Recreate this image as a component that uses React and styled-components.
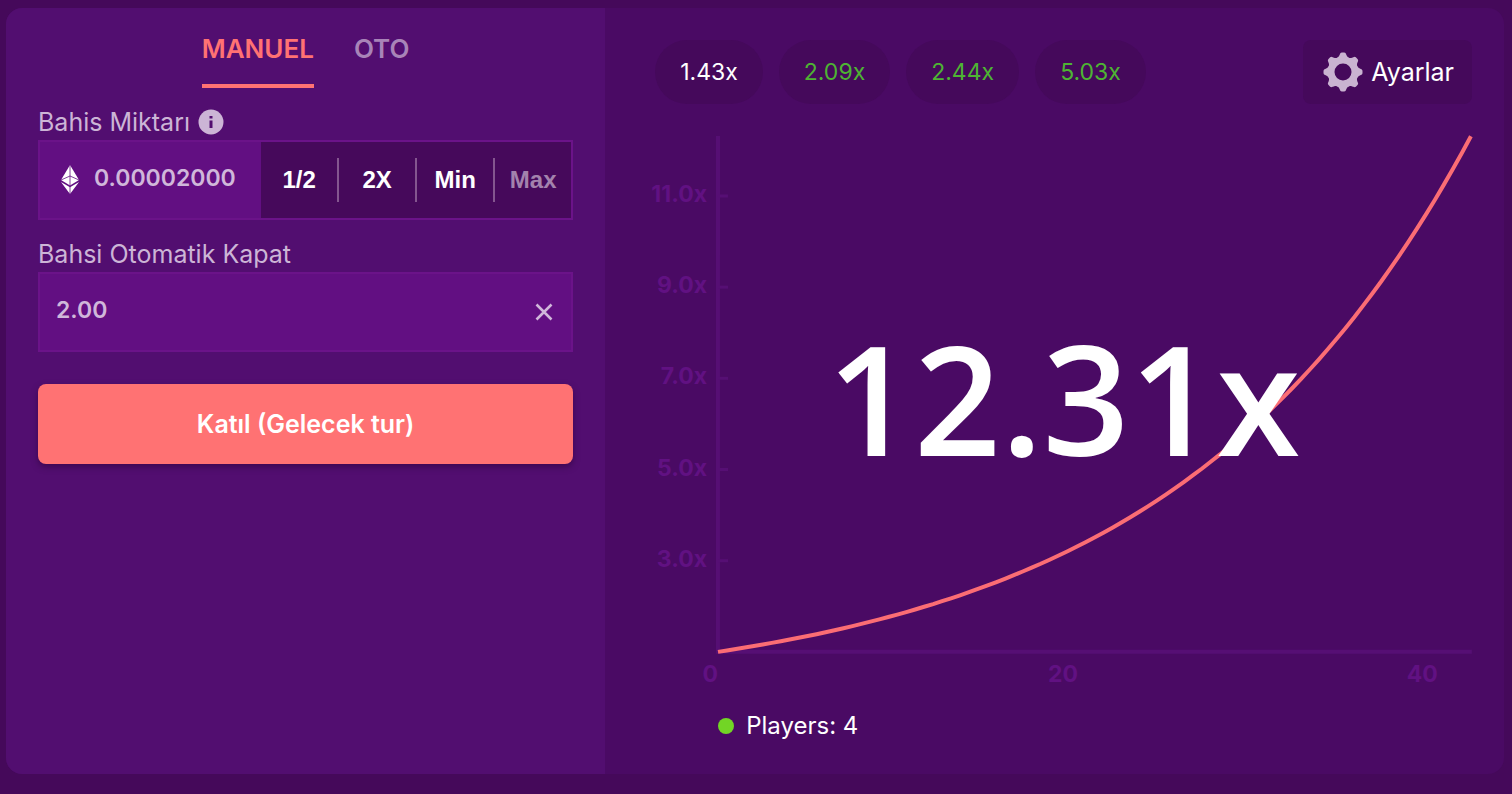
import React, { useState } from "react";
import styled, { createGlobalStyle } from "styled-components";

const GlobalStyle = createGlobalStyle`
	* {
		box-sizing: border-box;
	}

	body {
		margin: 0;
		background: #45095a;
		color: #ffffff;
		font-family: Inter, "Open Sans", sans-serif;
		font-size: 24px;
		line-height: 32px;
	}

	button,
	input {
		font: inherit;
		color: inherit;
		border: 0;
		padding: 0;
		background: none;
	}

	button {
		cursor: pointer;
	}
`;

const Page = styled.div`
	display: flex;
	min-height: 100vh;
	padding: 8px 8px 20px 6px;
`;

const Game = styled.main`
	display: grid;
	grid-template-columns: minmax(0, 2fr) minmax(0, 3fr);
	flex: 1;
	border-radius: 16px;
	overflow: hidden;
	background: #4a0a64;
`;

const BetPanel = styled.form`
	padding: 24px 32px;
	background: #520e70;
`;

const Tabs = styled.div`
	display: flex;
	justify-content: center;
	gap: 40px;
`;

const Tab = styled.button`
	height: 56px;
	padding-bottom: 18px;
	border-bottom: 4px solid ${(props) => (props.$active ? "#ff7273" : "transparent")};
	color: ${(props) => (props.$active ? "#ff7273" : "#a884b8")};
	font-size: 26px;
	font-weight: 600;
`;

const LabelRow = styled.div`
	display: flex;
	align-items: center;
	gap: 8px;
	height: 36px;
	margin-top: 16px;
	color: #ccb5d6;
	font-size: 25px;
`;

const InfoButton = styled.button`
	display: flex;
	color: #ccb5d6;
`;

const Field = styled.div`
	display: flex;
	align-items: center;
	height: 80px;
	border: 2px solid #6b1389;
	background: #620f82;
	color: #d0b7da;
`;

const Amount = styled.div`
	display: flex;
	flex: 1;
	align-items: center;
	gap: 14px;
	min-width: 0;
	padding-left: 20px;
`;

const TextInput = styled.input`
	flex: 1;
	width: 100%;
	min-width: 0;
	padding-bottom: 4px;
	padding-left: ${(props) => (props.$inset ? "16px" : "0")};
	font-size: 23px;
	font-weight: 600;
	outline: none;
`;

const QuickBets = styled.div`
	display: grid;
	grid-template-columns: repeat(3, 78px) 76px;
	align-items: center;
	align-self: stretch;
	background: #46095b;
`;

const QuickBet = styled.button`
	height: 44px;
	border-right: 2px solid #84568f;
	color: #ffffff;
	font-family: "Liberation Sans", Arial, sans-serif;
	font-weight: 700;

	&:last-child {
		border-right: 0;
	}

	&:disabled {
		color: #a382ad;
	}
`;

const ClearButton = styled.button`
	display: flex;
	padding: 0 18px;
`;

const JoinButton = styled.button`
	width: 100%;
	height: 80px;
	margin-top: 32px;
	border-radius: 8px;
	background: #ff7273;
	box-shadow: 0 3px 6px rgba(40, 0, 50, 0.5);
	color: #ffffff;
	font-size: 25px;
	font-weight: 600;
`;

const Board = styled.section`
	padding: 32px 32px 32px 50px;
`;

const TopBar = styled.div`
	display: flex;
	justify-content: space-between;
	margin-bottom: 32px;
`;

const History = styled.div`
	display: flex;
	gap: 16px;
`;

const Round = styled.span`
	padding: 16px 25px;
	border-radius: 32px;
	background: #45095b;
	color: ${(props) => (props.$win ? "#4eb433" : "#ffffff")};
	font-size: 23px;
`;

const SettingsButton = styled.button`
	display: flex;
	align-items: center;
	gap: 8px;
	height: 64px;
	padding: 0 18px 0 20px;
	border-radius: 8px;
	background: #45095b;
	font-size: 25px;
`;

const ChartArea = styled.div`
	display: grid;

	> * {
		grid-area: 1 / 1;
	}
`;

const ChartSvg = styled.svg`
	display: block;
	width: 100%;
	height: auto;
	overflow: visible;

	text {
		fill: #611182;
		font-size: 23px;
		font-weight: 700;
		text-anchor: end;
	}
`;

const Multiplier = styled.output`
	align-self: center;
	justify-self: center;
	padding-bottom: 28px;
	font-family: "Open Sans", "Noto Sans", sans-serif;
	font-size: 152px;
	font-weight: 600;
	line-height: 160px;
`;

const Players = styled.div`
	display: flex;
	align-items: center;
	gap: 12px;
	margin-top: 22px;
	padding-left: 63px;
`;

const Dot = styled.span`
	width: 16px;
	height: 16px;
	border-radius: 50%;
	background: #72d525;
`;

const rounds = [
	{ value: "1.43x", win: false },
	{ value: "2.09x", win: true },
	{ value: "2.44x", win: true },
	{ value: "5.03x", win: true },
];

const CRASH = 12.31;
const GROWTH = 0.06;
const DURATION = Math.log(CRASH) / GROWTH;

const toX = (time) => 63 + time * 18;
const toY = (value) => 516 - (value - 1) * 45.6;

// the multiplier grows as e^(0.06t)
const curve = Array.from({ length: 85 }, (_, i) => {
	const time = (DURATION * i) / 84;
	return `${toX(time).toFixed(1)},${toY(Math.exp(GROWTH * time)).toFixed(1)}`;
}).join(" ");

function InfoIcon() {
	return (
		<svg width="26" height="26" viewBox="0 0 26 26" aria-hidden="true">
			<circle cx="13" cy="13" r="12.5" fill="currentColor" />
			<path d="M11.500 11.500h3v7.500h-3zM11.500 7h3v2.600h-3z" fill="#520e70" />
		</svg>
	);
}

function EthIcon() {
	return (
		<svg width="20" height="30" viewBox="0 0 20 30" aria-hidden="true">
			<path d="M10 0 1 15l9 5.500 9-5.500z" fill="#ffffff" />
			<path d="M1 17l9 12 9-12-9 5.300z" fill="#ffffff" />
			<path d="M10 0v29M1 15l9-4 9 4" fill="none" stroke="#620f82" strokeWidth="0.8" />
		</svg>
	);
}

function CloseIcon() {
	return (
		<svg width="18" height="18" viewBox="0 0 18 18" aria-hidden="true">
			<path d="M1.500 1.500l15 15M16.500 1.500l-15 15" stroke="currentColor" strokeWidth="2.600" />
		</svg>
	);
}

function GearIcon() {
	return (
		<svg width="40" height="40" viewBox="-20 -20 40 40" aria-hidden="true">
			<g fill="#c9b3d1">
				<circle r="12" fill="none" stroke="#c9b3d1" strokeWidth="7" />
				{[0, 45, 90, 135, 180, 225, 270, 315].map((angle) => (
					<path
						key={angle}
						transform={`rotate(${angle})`}
						d="M-6.500-13.500C-4-15-3.500-17-2.800-18.500Q-2.300-19.500-1-19.500H1Q2.300-19.500 2.800-18.500C3.500-17 4-15 6.500-13.500z"
					/>
				))}
			</g>
		</svg>
	);
}

function Chart() {
	return (
		<ChartArea>
			<ChartSvg viewBox="0 0 817 552" role="img" aria-label="Multiplier over time">
				<path d="M63 0V516H817" fill="none" stroke="#560f74" strokeWidth="4" />
				{[3, 5, 7, 9, 11].map((value) => (
					<g key={value}>
						<path d={`M63 ${toY(value)}h10`} stroke="#560f74" strokeWidth="3" />
						<text x="52" y={toY(value) + 6}>
							{value.toFixed(1)}x
						</text>
					</g>
				))}
				{[0, 20, 40].map((time) => (
					<text key={time} x={toX(time)} y="546">
						{time}
					</text>
				))}
				<polyline points={curve} fill="none" stroke="#fb6d74" strokeWidth="4" />
			</ChartSvg>
			<Multiplier>{CRASH}x</Multiplier>
		</ChartArea>
	);
}

export default function App() {
	const [tab, setTab] = useState("MANUEL");
	const [amount, setAmount] = useState("0.00002000");
	const [cashout, setCashout] = useState("2.00");

	const scaleAmount = (factor) => setAmount((Number(amount) * factor).toFixed(8));

	return (
		<Page>
			<GlobalStyle />
			<Game>
				<BetPanel onSubmit={(e) => e.preventDefault()}>
					<Tabs role="tablist">
						{["MANUEL", "OTO"].map((name) => (
							<Tab
								key={name}
								type="button"
								role="tab"
								aria-selected={tab === name}
								$active={tab === name}
								onClick={() => setTab(name)}
							>
								{name}
							</Tab>
						))}
					</Tabs>

					<LabelRow>
						<label htmlFor="amount">Bahis Miktarı</label>
						<InfoButton type="button" aria-label="Info">
							<InfoIcon />
						</InfoButton>
					</LabelRow>
					<Field>
						<Amount>
							<EthIcon />
							<TextInput
								id="amount"
								value={amount}
								onChange={(e) => setAmount(e.target.value)}
							/>
						</Amount>
						<QuickBets>
							<QuickBet type="button" onClick={() => scaleAmount(0.5)}>
								1/2
							</QuickBet>
							<QuickBet type="button" onClick={() => scaleAmount(2)}>
								2X
							</QuickBet>
							<QuickBet type="button" onClick={() => setAmount("0.00000100")}>
								Min
							</QuickBet>
							<QuickBet type="button" disabled>
								Max
							</QuickBet>
						</QuickBets>
					</Field>

					<LabelRow>
						<label htmlFor="cashout">Bahsi Otomatik Kapat</label>
					</LabelRow>
					<Field>
						<TextInput
							id="cashout"
							$inset
							value={cashout}
							onChange={(e) => setCashout(e.target.value)}
						/>
						<ClearButton type="button" aria-label="Clear" onClick={() => setCashout("")}>
							<CloseIcon />
						</ClearButton>
					</Field>

					<JoinButton type="submit">Katıl (Gelecek tur)</JoinButton>
				</BetPanel>

				<Board>
					<TopBar>
						<History>
							{rounds.map((round) => (
								<Round key={round.value} $win={round.win}>
									{round.value}
								</Round>
							))}
						</History>
						<SettingsButton type="button">
							<GearIcon />
							Ayarlar
						</SettingsButton>
					</TopBar>
					<Chart />
					<Players>
						<Dot />
						Players: 4
					</Players>
				</Board>
			</Game>
		</Page>
	);
}
